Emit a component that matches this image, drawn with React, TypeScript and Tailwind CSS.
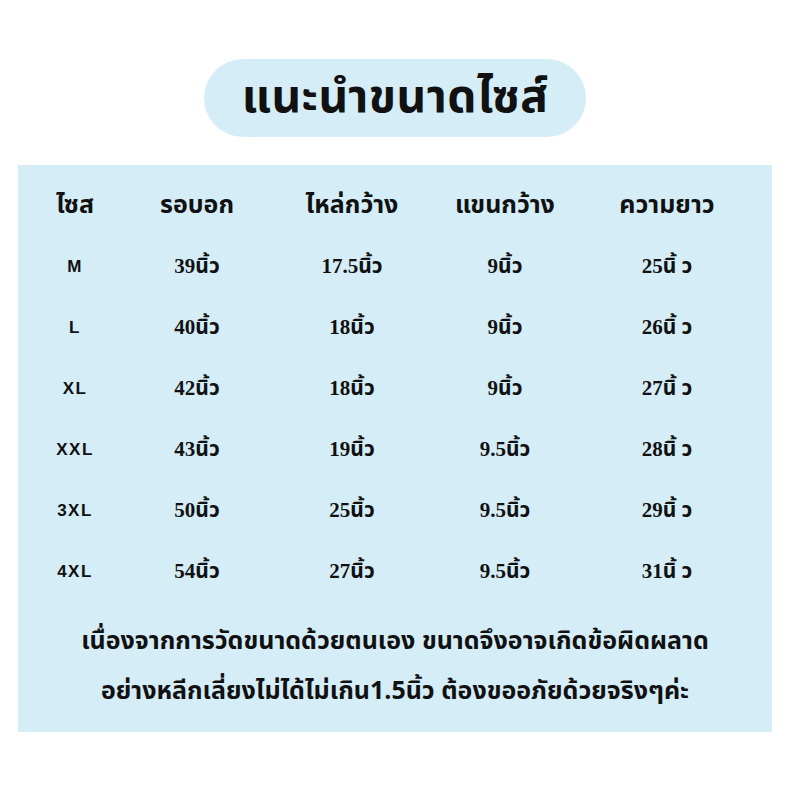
import React from "react";

const rows = [
  ["M", "39นิ้ว", "17.5นิ้ว", "9นิ้ว", "25นิ้ ว"],
  ["L", "40นิ้ว", "18นิ้ว", "9นิ้ว", "26นิ้ ว"],
  ["XL", "42นิ้ว", "18นิ้ว", "9นิ้ว", "27นิ้ ว"],
  ["XXL", "43นิ้ว", "19นิ้ว", "9.5นิ้ว", "28นิ้ ว"],
  ["3XL", "50นิ้ว", "25นิ้ว", "9.5นิ้ว", "29นิ้ ว"],
  ["4XL", "54นิ้ว", "27นิ้ว", "9.5นิ้ว", "31นิ้ ว"],
];

const headers = ["ไซส", "รอบอก", "ไหล่กว้าง", "แขนกว้าง", "ความยาว"];

const thai = "font-['Noto_Sans_Thai','Noto_Sans',sans-serif]";
const num = "font-['Liberation_Serif','Noto_Sans_Thai',serif]";

export default function App() {
  return (
    <div className="w-[790px] h-[790px] bg-white text-[#111] flex flex-col items-center">
      <div className="mt-[59px] w-[382px] h-[78px] rounded-full bg-[#d4edf7] flex items-center justify-center">
        <h1 className={`${thai} text-[46px] font-bold leading-none tracking-[0.5px]`}>แนะนำขนาดไซส์</h1>
      </div>

      <div className="mt-[28px] w-[754px] h-[567px] bg-[#d4edf7] flex flex-col">
        <div className="pt-[10px] grid grid-cols-[114px_130px_180px_126px_198px] auto-rows-[61px] items-center justify-items-center">
          {headers.map((h) => (
            <div key={h} className={`${thai} text-[25px] font-bold`}>
              {h}
            </div>
          ))}
          {rows.map((r) => (
            <React.Fragment key={r[0]}>
              <div className="font-['Liberation_Sans',sans-serif] text-[17px] font-bold tracking-[1.5px]">{r[0]}</div>
              {r.slice(1).map((c, i) => (
                <div key={i} className={`${num} text-[21px] font-bold`}>
                  {c}
                </div>
              ))}
            </React.Fragment>
          ))}
        </div>
        <div className={`${thai} mt-[14px] flex flex-col items-center text-[25px] font-bold leading-[50px]`}>
          <p>เนื่องจากการวัดขนาดด้วยตนเอง ขนาดจึงอาจเกิดข้อผิดผลาด</p>
          <p>อย่างหลีกเลี่ยงไม่ได้ไม่เกิน1.5นิ้ว ต้องขออภัยด้วยจริงๆค่ะ</p>
        </div>
      </div>
    </div>
  );
}
